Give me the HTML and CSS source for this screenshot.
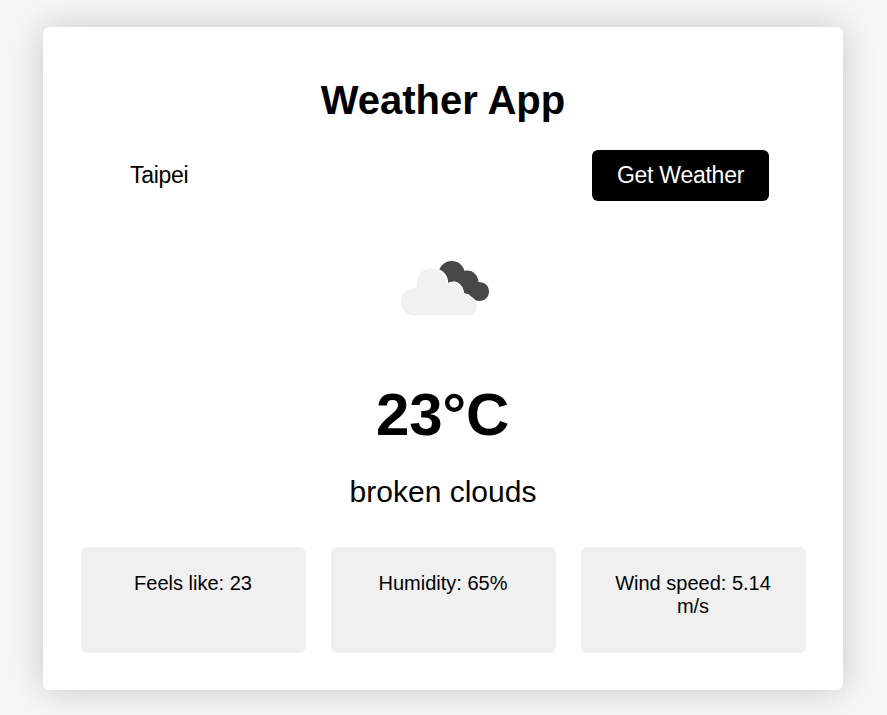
FILE: index.html
```html
<!DOCTYPE html>
<html lang="en">
<head>
<meta charset="utf-8">
<title>Weather App</title>
<link rel="stylesheet" href="styles.css">
</head>
<body>
<main class="container">
  <h1>Weather App</h1>
  <div class="search">
    <input class="city" type="text" value="Taipei" aria-label="City">
    <button class="submit" type="button">Get Weather</button>
  </div>
  <div class="icon">
    <svg width="90" height="57" viewBox="400 260 90 57" aria-hidden="true">
      <path class="cloud-back" d="M439.300 269.500C442 264 446 261 452 261C458 261 463 265 464.500 271C471 269 478 274 478.500 282C485 282 489 286 489 291.500C489 297 485 301 479 301C475 301 471.500 298 469 294.500L463.500 293.500C464 287 460 283 455 281.500L448 283C448.500 277 445 272 439.300 269.500Z"/>
      <path class="cloud-front" d="M414.500 315.500C407 315.500 401 310 401 302C401 294 407 288 416.500 288C416.500 276 422 268.500 431 268.500C438.500 268.500 444 275 446.500 284.500C454 279 462 284 463.500 293.500C470 295 477 301 477 307C477 312 473 315.500 467 315.500Z"/>
    </svg>
  </div>
  <div class="temperature">23°C</div>
  <div class="description">broken clouds</div>
  <div class="details">
    <div class="detail">Feels like: 23</div>
    <div class="detail">Humidity: 65%</div>
    <div class="detail">Wind speed: 5.14 m/s</div>
  </div>
</main>
</body>
</html>
```
FILE: styles.css
```css
* { box-sizing: border-box; }
body { min-height: 100vh; margin: 0; padding: 27px 0 0 43px; background: #f7f7f7; font-family: "Liberation Sans", Arial, sans-serif; color: #000; }
.container { width: 800px; height: 663px; padding: 50px 37px 37px 38px; background: #fff; border-radius: 6px; box-shadow: 0 0 37px rgba(0,0,0,.2); text-align: center; }
h1 { margin: 0 1px 0 0; font-size: 40px; line-height: 46px; }
.search { display: flex; justify-content: space-between; margin: 27px 37px 0 37px; height: 51px; }
.city { width: 400px; border: 0; padding: 0 12px; font: 23px "Liberation Sans", Arial, sans-serif; letter-spacing: -.3px; color: #000; background: none; }
.submit { width: 177px; border: 0; border-radius: 6px; background: #000; color: #fff; font: 23px "Liberation Sans", Arial, sans-serif; letter-spacing: -.25px; padding: 0; }
.icon { height: 125px; margin-top: 25px; padding: 34px 0 0 3px; }
.icon svg { display: block; margin: 0 auto; }
.cloud-back { fill: #484848; }
.cloud-front { fill: #f1f1f1; stroke: #fff; stroke-width: 1.5; paint-order: stroke; }
.temperature { margin: 29px 2px 0 0; font-size: 60px; line-height: 69px; font-weight: bold; letter-spacing: -.3px; }
.description { margin: 26px 1px 0 0; font-size: 30px; line-height: 34px; }
.details { display: grid; grid-template-columns: repeat(3, 225px); gap: 25px; margin-top: 38px; }
.detail { height: 106px; padding: 25px 26px 0 25px; border-radius: 6px; background: #f0f0f0; font-size: 20px; line-height: 23px; }
```
